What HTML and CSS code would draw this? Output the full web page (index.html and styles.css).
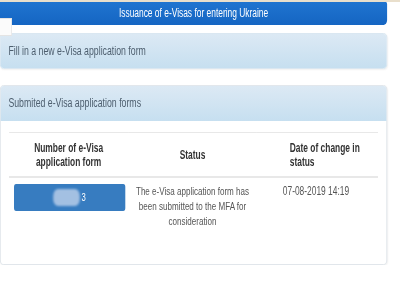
FILE: index.html
```html
<!DOCTYPE html>
<html lang="en">
<head>
    <meta charset="UTF-8">
    <meta name="viewport" content="width=device-width, initial-scale=1.0">
    <title>e-Visa</title>
    <link rel="stylesheet" href="styles.css">
</head>
<body>
    <div class="top-line"></div>
    <div class="page">
        <div class="page-title">Issuance of e-Visas for entering Ukraine</div>
        <div class="side-tab"></div>

        <div class="panel panel-link">
            <div class="panel-heading">Fill in a new e-Visa application form</div>
        </div>

        <div class="panel panel-list">
            <div class="panel-heading">Submited e-Visa application forms</div>
            <div class="panel-body">
                <table class="forms-table">
                    <thead>
                        <tr>
                            <th class="col-num">Number of e-Visa application form</th>
                            <th class="col-status">Status</th>
                            <th class="col-date">Date of change in status</th>
                        </tr>
                    </thead>
                    <tbody>
                        <tr>
                            <td class="col-num">
                                <a class="btn-form"><span class="blur"></span>3</a>
                            </td>
                            <td class="col-status">The e-Visa application form has been submitted to the MFA for consideration</td>
                            <td class="col-date">07-08-2019 14:19</td>
                        </tr>
                    </tbody>
                </table>
            </div>
        </div>
    </div>
</body>
</html>
```

FILE: styles.css
```css
/* the screen is shown squeezed sideways, so the page is laid out wide and scaled */
html {
    overflow: hidden;
}
body {
    font-family: 'Liberation Sans', Arial, sans-serif;
    margin: 0;
    width: 400px;
    background: #fff;
    color: #555;
    font-size: 12px;
    overflow: hidden;
}
.top-line {
    height: 2px;
    background: #e9dfcc;
}
.page {
    position: relative;
    width: 553px;
    transform: scaleX(0.7);
    transform-origin: left top;
}
.page-title {
    height: 23px;
    line-height: 23px;
    text-align: center;
    color: #fff;
    background: linear-gradient(#1f74d0, #1565c2);
    border-radius: 0 2px 5px 5px;
    font-size: 12px;
}
.side-tab {
    position: absolute;
    left: 0;
    top: 16px;
    width: 17px;
    height: 18px;
    background: #fbfbfb;
    border: 1px solid #e4e4e4;
    border-left: none;
    box-sizing: border-box;
}
.panel {
    border: 1px solid #d3e3ee;
    border-radius: 5px;
    box-shadow: 0 1px 2px rgba(0,0,0,0.06);
}
.panel-link {
    margin-top: 8px;
}
.panel-list {
    margin-top: 16px;
    background: #fff;
    border-color: #dde3e8;
}
.panel-heading {
    height: 34px;
    line-height: 34px;
    padding-left: 11px;
    color: #4d5e6e;
    font-size: 12.5px;
    background: linear-gradient(#dce9f4, #c6dff0);
    border-radius: 4px;
}
.panel-list .panel-heading {
    height: 35px;
    border-radius: 4px 4px 0 0;
}
.panel-body {
    padding: 11px 12px 29px 12px;
}
.forms-table {
    width: 100%;
    border-collapse: collapse;
    table-layout: fixed;
}
.forms-table th,
.forms-table td {
    box-sizing: border-box;
}
.forms-table th {
    font-weight: bold;
    font-size: 12px;
    line-height: 14px;
    color: #333;
    padding: 8px 8px 7px;
    border-top: 1px solid #e8e8e8;
    border-bottom: 2px solid #e8e8e8;
    text-align: center;
}
.forms-table td {
    vertical-align: top;
    line-height: 15px;
    font-size: 11.5px;
    padding: 6px 7px;
    text-align: center;
}
.col-num { width: 170px; }
.col-status { width: 184px; }
.forms-table td.col-num {
    padding: 6px 4px 6px 7px;
}
.forms-table th.col-date {
    text-align: left;
    padding-left: 47px;
}
.forms-table td.col-date {
    text-align: left;
    font-size: 12px;
    padding-left: 37px;
}
.btn-form {
    display: flex;
    align-items: center;
    justify-content: center;
    height: 27px;
    background: #377cc0;
    border-radius: 3px;
    color: #fff;
    font-size: 11px;
}
.blur {
    width: 38px;
    height: 17px;
    background: #a3c0e2;
    border-radius: 7px;
    filter: blur(1.2px);
    margin-right: 2px;
}
```
